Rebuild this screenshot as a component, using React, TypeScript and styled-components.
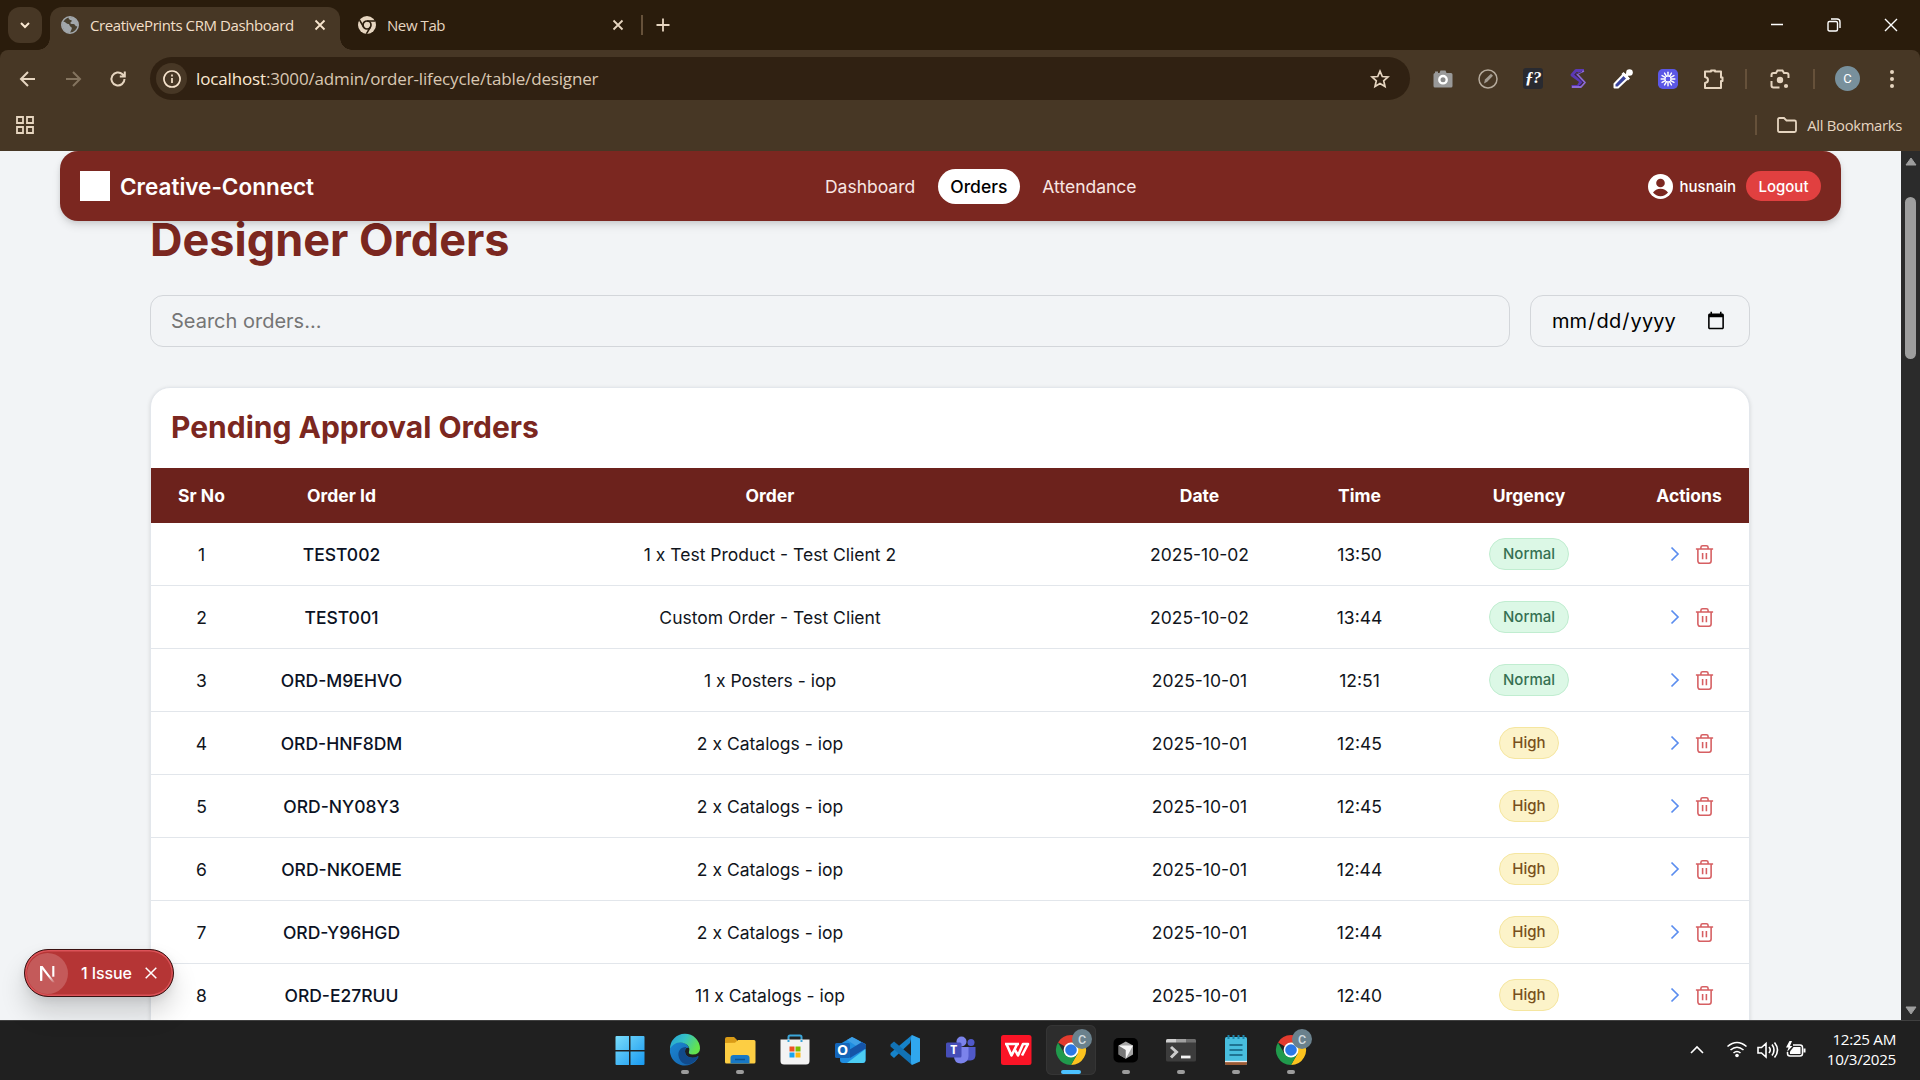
import React from "react";
import styled, { createGlobalStyle, css } from "styled-components";

const ink = "#e6d5c0";

const Global = createGlobalStyle`
  * { box-sizing: border-box; }
  body { margin: 0; overflow: hidden; background: #202020; }
  input, button { font: inherit; }
`;

const Screen = styled.div`
  width: 1920px;
  height: 1080px;
  display: flex;
  flex-direction: column;
  overflow: hidden;
  font-family: Inter, "Liberation Sans", sans-serif;
`;

/* ---------- browser chrome ---------- */

const TabStrip = styled.div`
  flex: 0 0 50px;
  display: flex;
  align-items: flex-start;
  padding: 7px 0 0 8px;
  background: #2a1c0c;
  color: ${ink};
  font: 15px "Open Sans", "Noto Sans", sans-serif;
`;

const TabSearch = styled.div`
  width: 34px;
  height: 36px;
  margin-right: 8px;
  border-radius: 12px;
  background: #473725;
  display: grid;
  place-items: center;
`;

const Tab = styled.div<{ $active?: boolean }>`
  position: relative;
  width: ${(p) => (p.$active ? 290 : 301)}px;
  height: 43px;
  display: flex;
  align-items: center;
  padding: 0 ${(p) => (p.$active ? 13 : 16)}px 7px ${(p) => (p.$active ? 11 : 18)}px;
  letter-spacing: -0.42px;
  white-space: nowrap;
  ${(p) =>
    p.$active &&
    css`
      background: #473725;
      border-radius: 12px 12px 0 0;
      color: #f2dfc8;
      &::before,
      &::after {
        content: "";
        position: absolute;
        bottom: 0;
        width: 12px;
        height: 12px;
      }
      &::before {
        left: -12px;
        background: radial-gradient(circle at 0 0, transparent 11.5px, #473725 12px);
      }
      &::after {
        right: -12px;
        background: radial-gradient(circle at 100% 0, transparent 11.5px, #473725 12px);
      }
    `}
`;

const TabTitle = styled.span`
  flex: 1;
  margin-left: 11px;
`;

const NewTab = styled.div`
  height: 36px;
  display: flex;
  align-items: center;
  gap: 13px;
`;

const Divider = styled.i`
  width: 2px;
  height: 20px;
  background: #66513a;
`;

const WindowControls = styled.div`
  margin-left: auto;
  height: 36px;
  display: flex;
  align-items: center;
  gap: 43px;
  padding: 0 22px 1px 0;
`;

const Toolbar = styled.div`
  flex: 0 0 58px;
  display: flex;
  align-items: center;
  padding-bottom: 1px;
  background: #473725;
  border-radius: 8px 8px 0 0;
`;

const ToolbarBack = styled.div`
  flex: 0 0 58px;
  background: #2a1c0c;
  display: flex;
  flex-direction: column;
`;

const NavIcons = styled.div`
  width: 150px;
  display: flex;
  align-items: center;
  gap: 25px;
  padding-left: 18px;
`;

const Address = styled.div`
  width: 1260px;
  height: 43px;
  border-radius: 22px;
  background: #302112;
  display: flex;
  align-items: center;
  padding: 0 20px 0 6px;
  color: #d9c8b3;
  font: 17px "Open Sans", "Noto Sans", sans-serif;
`;

const SiteInfo = styled.div`
  width: 31px;
  height: 31px;
  border-radius: 50%;
  background: #473725;
  display: grid;
  place-items: center;
`;

const Url = styled.span`
  flex: 1;
  margin-left: 9px;
  padding-bottom: 1px;
  letter-spacing: -0.15px;
  b { font-weight: 400; color: #fbe9d3; }
`;

const Extensions = styled.div`
  display: flex;
  align-items: center;
  margin-left: 23px;
`;

const Slot = styled.div<{ $w?: number }>`
  width: ${(p) => p.$w ?? 45}px;
  height: 28px;
  display: flex;
  align-items: center;
`;

const FontBadge = styled.span`
  width: 20px;
  height: 21px;
  border-radius: 3px;
  background: #292a30;
  color: #fff;
  font: italic bold 17px/19px "Liberation Serif", serif;
  text-align: center;
  letter-spacing: -0.5px;
`;

const Profile = styled.span`
  width: 25px;
  height: 25px;
  border-radius: 50%;
  background: #78909c;
  color: #fff;
  font: 13px/25px Roboto, sans-serif;
  text-align: center;
`;

const Bookmarks = styled.div`
  flex: 0 0 43px;
  display: flex;
  align-items: center;
  padding: 0 18px 10px 16px;
  background: #473725;
  color: ${ink};
  font: 14.8px "Open Sans", "Noto Sans", sans-serif;
  letter-spacing: -0.3px;
`;

const AllBookmarks = styled.div`
  margin-left: auto;
  display: flex;
  align-items: center;
  span { margin-left: 10px; }
  svg { margin-left: 20px; }
`;

/* ---------- page ---------- */

const Viewport = styled.div`
  position: relative;
  flex: 1;
  min-height: 0;
  display: flex;
  background: #f2f4f6;
`;

const Page = styled.main`
  flex: 1;
  min-width: 0;
  overflow: hidden;
  padding-left: 60px;
`;

const Navbar = styled.nav`
  position: relative;
  z-index: 1;
  width: 1781px;
  height: 70px;
  padding: 0 20px;
  border-radius: 18px;
  background: #7b2720;
  box-shadow: 0 5px 9px rgba(0, 0, 0, 0.1), 0 2px 4px rgba(0, 0, 0, 0.08);
  display: flex;
  justify-content: space-between;
  align-items: center;
  color: #fff;
`;

const Brand = styled.div`
  display: flex;
  align-items: center;
  gap: 10px;
  font-size: 22.5px;
  font-weight: 600;
`;

const LogoBox = styled.i`
  width: 30px;
  height: 30px;
  background: #fff;
`;

const Menu = styled.div`
  display: flex;
  font-size: 17.5px;
`;

const MenuItem = styled.a<{ $active?: boolean }>`
  height: 35px;
  padding: 0 12.5px;
  margin: 0 5px;
  border-radius: 18px;
  line-height: 35px;
  color: ${(p) => (p.$active ? "#000" : "#f8e6e3")};
  background: ${(p) => (p.$active ? "#fff" : "transparent")};
  font-weight: ${(p) => (p.$active ? 500 : 400)};
`;

const Account = styled.div`
  display: flex;
  align-items: center;
  font-size: 15px;
  font-weight: 500;
  svg { margin-right: 7px; }
`;

const Logout = styled.button`
  width: 75px;
  height: 30px;
  margin-left: 10px;
  padding: 0;
  border: 0;
  border-radius: 15px;
  background: #e14040;
  color: #fff;
  font-weight: 500;
`;

const Content = styled.div`
  width: 1600px;
  margin: -8px 0 0 90px;
`;

const Title = styled.h1`
  margin: 0;
  height: 54px;
  line-height: 54px;
  font-size: 45px;
  font-weight: 700;
  color: #7b2720;
`;

const Filters = styled.div`
  display: flex;
  gap: 20px;
  margin: 28px 0 40px;
`;

const field = css`
  height: 52px;
  padding: 0 20px;
  border: 1px solid #d3d6da;
  border-radius: 13px;
  background: transparent;
  font-size: 20px;
  color: #000;
`;

const Search = styled.input`
  ${field}
  flex: 1;
  &::placeholder { color: #757575; }
`;

const DateField = styled.input`
  ${field}
  width: 220px;
  padding-right: 21px;
  letter-spacing: 0.1px;
`;

const Card = styled.section`
  border: 1px solid #e3e7ec;
  border-radius: 20px 20px 0 0;
  background: #fff;
  box-shadow: 0 1px 4px rgba(0, 0, 0, 0.12);
  height: 760px;
  overflow: hidden;
`;

const CardTitle = styled.h2`
  margin: 0;
  height: 80px;
  padding: 0 20px;
  line-height: 79px;
  font-size: 30px;
  font-weight: 700;
  color: #7b2720;
`;

const Row = styled.div<{ $head?: boolean }>`
  height: ${(p) => (p.$head ? 55 : 63)}px;
  display: grid;
  grid-template-columns: 101px 179px 678px 181px 139px 200px 120px;
  align-items: center;
  justify-items: center;
  font-size: 17.5px;
  color: ${(p) => (p.$head ? "#fff" : "#11151c")};
  font-weight: ${(p) => (p.$head ? 700 : 400)};
  background: ${(p) => (p.$head ? "#6c221c" : "#fff")};
  border-bottom: ${(p) => (p.$head ? "0" : "1px solid #e2e6eb")};
`;

const OrderId = styled.span`
  color: #0b1224;
  font-weight: 500;
`;

const Pill = styled.span<{ $high?: boolean }>`
  height: 32px;
  padding: 0 12.5px;
  border-radius: 16px;
  line-height: 30px;
  font-size: 15px;
  font-weight: 500;
  border: 1px solid ${(p) => (p.$high ? "#f5e6a0" : "#c0edd0")};
  background: ${(p) => (p.$high ? "#fcf3c9" : "#dcf8e6")};
  color: ${(p) => (p.$high ? "#78501c" : "#357052")};
`;

const Actions = styled.span`
  display: flex;
  align-items: center;
  gap: 14px;
  margin-left: 6px;
`;

const Scrollbar = styled.div`
  flex: 0 0 19px;
  background: #2b2b2b;
  display: flex;
  flex-direction: column;
  align-items: center;
  padding: 6px 0 5px;
`;

const Thumb = styled.i`
  width: 11px;
  height: 162px;
  margin: 31px 0 auto;
  border-radius: 6px;
  background: #9e9e9e;
`;

const IssueToast = styled.div`
  position: absolute;
  z-index: 2;
  left: 24px;
  top: 798px;
  width: 150px;
  height: 48px;
  padding: 0 16px 0 2px;
  border-radius: 24px;
  border: 1px solid #3a1111;
  background: #b53535;
  box-shadow: inset 0 0 0 1.5px #db5358, 0 16px 26px rgba(0, 0, 0, 0.16), 0 3px 8px rgba(0, 0, 0, 0.08);
  display: flex;
  align-items: center;
  color: #fff;
  font-size: 16px;
  font-weight: 500;
  letter-spacing: -0.1px;
  span { flex: 1; margin-left: 13px; white-space: nowrap; }
`;

const NextBadge = styled.i`
  width: 41px;
  height: 41px;
  border-radius: 50%;
  background: #c45a5a;
  display: grid;
  place-items: center;
`;

/* ---------- taskbar ---------- */

const Taskbar = styled.footer`
  flex: 0 0 60px;
  display: flex;
  align-items: center;
  background: #202020;
  border-top: 1px solid #404040;
  padding: 0 0 2px 605px;
`;

const TaskButton = styled.div<{ $active?: boolean }>`
  width: 50px;
  height: 50px;
  margin-right: 5.1px;
  border-radius: 6px;
  display: flex;
  flex-direction: column;
  align-items: center;
  padding-top: 8px;
  background: ${(p) => (p.$active ? "#2d2d2d" : "transparent")};
  box-shadow: ${(p) => (p.$active ? "inset 0 0 0 1px #353535" : "none")};
  svg { display: block; overflow: visible; flex: none; }
`;

const Running = styled.i<{ $active?: boolean }>`
  width: ${(p) => (p.$active ? 20 : 8)}px;
  height: 4px;
  margin-top: 2px;
  border-radius: 2px;
  background: ${(p) => (p.$active ? "#4cc2ff" : "#9c9c9c")};
`;

const Tray = styled.div`
  margin-left: auto;
  display: flex;
  align-items: center;
  padding-right: 24px;
  color: #fff;
  svg { flex: none; }
`;

const Clock = styled.div`
  width: 89px;
  padding-bottom: 1px;
  text-align: right;
  font: 15.2px/20px "Open Sans", "Noto Sans", sans-serif;
  letter-spacing: -0.3px;
  white-space: nowrap;
`;

/* ---------- icons ---------- */

type StrokeProps = { w: number; h?: number; d: string; c?: string; s?: number };
const Line = ({ w, h = w, d, c = ink, s = 2 }: StrokeProps) => (
  <svg width={w} height={h} viewBox={`0 0 ${w} ${h}`} fill="none" stroke={c} strokeWidth={s}>
    <path d={d} />
  </svg>
);

const Globe = () => (
  <svg width="18" height="18" viewBox="0 0 18 18">
    <circle cx="9" cy="9" r="8.2" fill="#49402f" stroke="#a2a7ab" strokeWidth="1.6" />
    <path d="M2 6c2-1 3 2 5 2s1 2 3 3 0 3-1 6c-4 0-7-3-8-8zM8 1c-1 3 1 3 2 3s1 2-1 3c2 2 4 0 5 2s1 1 3 1C17 4 13 1 8 1z" fill="#a2a7ab" />
  </svg>
);

const ChromeMono = () => (
  <svg width="18" height="18" viewBox="0 0 18 18">
    <circle cx="9" cy="9" r="9" fill={ink} />
    <circle cx="9" cy="9" r="4" fill={ink} stroke="#2a1c0c" strokeWidth="1.7" />
    <path d="M9 5h8M5.6 11 1.6 4.2M12.4 11 8.4 17.8" stroke="#2a1c0c" strokeWidth="1.6" />
  </svg>
);

const Chrome = () => (
  <svg width="30" height="35" viewBox="0 0 30 35">
    <g transform="translate(0 2)">
      <path d="M15 15 2 7.5A15 15 0 0 1 28 7.5L15 7.5z" fill="#e33b2e" />
      <path d="M28 7.5A15 15 0 0 1 15 30l6.5-11.2L15 7.5z" fill="#fcc31e" />
      <path d="M2 7.5A15 15 0 0 0 15 30l6.5-11.2-13 0z" fill="#209a4c" />
      <circle cx="15" cy="15" r="7.4" fill="#fff" />
      <circle cx="15" cy="15" r="5.8" fill="#2b78e6" />
    </g>
    <circle cx="26" cy="6" r="10" fill="#6a818d" />
    <text x="26" y="10.5" fontSize="12.5" fontFamily="Roboto, sans-serif" fontWeight="500" fill="#d3dce0" textAnchor="middle">C</text>
  </svg>
);

const Trash = () => (
  <svg width="21" height="21" viewBox="0 0 20 20" fill="none" stroke="#d65f62" strokeWidth="1.5">
    <path d="M1.800 4.7h16.400M3.7 4.7v11.600a2 2 0 0 0 2 2h8.600a2 2 0 0 0 2-2V4.700M6.600 4.500V3.200q0-1.600 1.600-1.600h3.600q1.600 0 1.600 1.600v1.300M8.200 8.500v6M11.800 8.500v6" />
  </svg>
);

const taskIcons: { name: string; run?: boolean; active?: boolean; icon: React.ReactNode }[] = [
  {
    name: "start",
    icon: (
      <svg width="30" height="35" viewBox="0 0 30 35">
        <defs>
          <linearGradient id="win" x1="0" y1="0" x2="1" y2="1">
            <stop offset="0" stopColor="#79dcfb" />
            <stop offset="1" stopColor="#1899f0" />
          </linearGradient>
        </defs>
        <path d="M1.500 3H14v14H.5V4q0-1 1-1zM15.500 3H28.500q1 0 1 1V17h-14zM.5 18.500H14v13.500H1.500q-1 0-1-1zM15.500 18.500h14V31q0 1-1 1h-13z" fill="url(#win)" />
      </svg>
    ),
  },
  {
    name: "edge",
    run: true,
    icon: (
      <svg width="30" height="35" viewBox="0 0 30 35">
        <defs>
          <linearGradient id="edgeTop" x1="0" y1="0" x2="1" y2=".4">
            <stop offset="0" stopColor="#249fd8" />
            <stop offset=".5" stopColor="#35c1c6" />
            <stop offset="1" stopColor="#63e34d" />
          </linearGradient>
          <linearGradient id="edgeLow" x1="0" y1="0" x2="1" y2="1">
            <stop offset="0" stopColor="#1b86d3" />
            <stop offset="1" stopColor="#1460a8" />
          </linearGradient>
        </defs>
        <path d="M0 16Q1 9 9 9q8 0 10 6-4-1-4 3.500 0 6 7.500 6.300 3.500 0 5.500-1.500.8 0 .3 1A15 15 0 0 1 0 16z" fill="url(#edgeLow)" />
        <path d="M11 15.500q-4 4-2 9.500 2.500 6 9 6.500 6-1 10-7 .5-1.500-.5-1.200-2 1.500-5 1.500-7.500-.3-7.500-6.300 0-3 1.500-4.500-3-.5-5.500 1.500z" fill="#114a8b" />
        <path d="M0 16A15 15 0 0 1 30 15.500q0 6-7.500 6-4.500 0-3.500-2.700C21 13 15 9 9.500 9.500Q3 10 0 16z" fill="url(#edgeTop)" />
      </svg>
    ),
  },
  {
    name: "explorer",
    run: true,
    icon: (
      <svg width="30" height="35" viewBox="0 0 30 35">
        <path d="M0 6q0-2 2-2h7l3 3v4H0z" fill="#d99b16" />
        <path d="M0 10l10-.3 3-2.700h16q1.500 0 1.500 1.500V29q0 1.500-1.500 1.500H1.500Q0 30.500 0 29z" fill="#fdce43" />
        <path d="M5.500 30.500V25q0-3 3-3h13q3 0 3 3v5.500z" fill="#1778c6" />
        <path d="M10 26.500h10" stroke="#0c5492" strokeWidth="1.500" />
      </svg>
    ),
  },
  {
    name: "store",
    icon: (
      <svg width="30" height="35" viewBox="0 0 30 35">
        <path d="M8.500 8V4q0-1.500 1.500-1.500h10q1.500 0 1.500 1.500v4" fill="none" stroke="#3aa5d8" strokeWidth="2" />
        <path d="M.5 6.500h29V28q0 3.500-3.500 3.500H4Q.5 31.500.5 28z" fill="#f3f3f3" />
        <path d="M8.500 7v2M21.500 7v2" stroke="#3aa5d8" strokeWidth="2" />
        <path d="M9.500 13.500h5v5h-5z" fill="#ef5125" />
        <path d="M15.500 13.500h5v5h-5z" fill="#7fba00" />
        <path d="M9.500 19.500h5v5h-5z" fill="#18a4ef" />
        <path d="M15.500 19.500h5v5h-5z" fill="#fdb813" />
      </svg>
    ),
  },
  {
    name: "outlook",
    icon: (
      <svg width="30" height="35" viewBox="0 0 30 35">
        <path d="M5 11 17 4l13.500 7v16q0 3-3 3H8q-3 0-3-3z" fill="#1f8de0" />
        <path d="M12 7l14 9 4.500-4.500L20 5.500 17 4z" fill="#3d9fe6" />
        <path d="M14 17 27 9l3.500 2.500v4L15 25z" fill="#1554a8" />
        <path d="M12 30 30.500 16v11q0 3-3 3z" fill="#4ccdf3" />
        <rect x="0" y="10" width="15" height="15" rx="1.500" fill="#1465b8" />
        <text x="7.500" y="22.300" textAnchor="middle" fill="#fff" fontSize="14" fontWeight="700" fontFamily="Open Sans, sans-serif">O</text>
      </svg>
    ),
  },
  {
    name: "code",
    icon: (
      <svg width="30" height="35" viewBox="0 0 30 35">
        <path d="M22 2l-2 8L4 25l-3.500-3v-2z" fill="#1683ca" />
        <path d="M.5 13.500v-2L4 8.500 22 23.500V32z" fill="#1272b5" />
        <path d="M22 2l8 3.500v23L22 32q-1-1-1-3V5q0-2 1-3z" fill="#30a7ee" />
      </svg>
    ),
  },
  {
    name: "teams",
    icon: (
      <svg width="30" height="35" viewBox="0 0 30 35">
        <circle cx="15.500" cy="8.500" r="5" fill="#7b83eb" />
        <circle cx="25" cy="9.500" r="3.500" fill="#5059c9" />
        <path d="M20 14h9.500v8q0 5-5 5.500H20z" fill="#5059c9" />
        <path d="M8 14h14.500v9q0 7-7.500 7.500-7-.5-7-7z" fill="#7b83eb" />
        <rect x="0" y="9.500" width="15.500" height="15" rx="1.500" fill="#464eb8" />
        <text x="7.700" y="21.200" textAnchor="middle" fill="#fff" fontSize="12" fontWeight="700" fontFamily="Open Sans, sans-serif">T</text>
      </svg>
    ),
  },
  {
    name: "wps",
    icon: (
      <svg width="30" height="35" viewBox="0 0 30 35">
        <rect x="0" y="2" width="30.500" height="30" rx="2.500" fill="#fa1426" />
        <path d="M4 11h14M5.500 11l5 11.500 5.500-11M13.500 16l3.500 6.500L22 11h5l-6 11.500" fill="none" stroke="#fff" strokeWidth="2.600" strokeLinejoin="round" />
      </svg>
    ),
  },
  { name: "chrome", run: true, active: true, icon: <Chrome /> },
  {
    name: "cursor",
    run: true,
    icon: (
      <svg width="30" height="35" viewBox="0 0 30 35">
        <rect x="2.500" y="5" width="24.500" height="24.500" rx="5" fill="#000" />
        <path d="M14.800 8.500 22 12.500v9l-7.200 4.200-7.200-4.200v-9z" fill="#a5a5a5" />
        <path d="M7.600 12.500 14.800 16.500v9.200l-7.200-4.200z" fill="#777" />
        <path d="M7.600 12.500H22L14.800 25.700V17z" fill="#f5f5f5" />
      </svg>
    ),
  },
  {
    name: "terminal",
    run: true,
    icon: (
      <svg width="30" height="35" viewBox="0 0 30 35">
        <rect x="0" y="6" width="30" height="22.500" rx="1.500" fill="#3c3c3c" />
        <path d="M0 9.500V7.500Q0 6 1.500 6H10v3.500z" fill="#d0d0d0" />
        <path d="M10 6h10v3.500H10z" fill="#a0a0a0" />
        <path d="M20 6h8.500Q30 6 30 7.500v2H20z" fill="#6e6e6e" />
        <path d="M5 14l5.500 5L5 24.500" fill="none" stroke="#ccc" strokeWidth="3" />
        <path d="M15 24h9.500" stroke="#f3f3f3" strokeWidth="2.800" />
      </svg>
    ),
  },
  {
    name: "notepad",
    run: true,
    icon: (
      <svg width="30" height="35" viewBox="0 0 30 35">
        <rect x="4" y="4" width="22" height="28" rx="1.500" fill="#48bede" />
        <path d="M4 29h22v1.500q0 1.500-1.500 1.500h-19Q4 32 4 30.500z" fill="#9b5a34" />
        <path d="M4 28.500h22" stroke="#e9eef0" strokeWidth="1.300" />
        <path d="M8.500 12h13M8.500 17h13M8.500 22h13" stroke="#125c7b" strokeWidth="1.700" />
        <path d="M7.500 2v4M12.500 2v4M17.500 2v4M22.500 2v4" stroke="#1c86ac" strokeWidth="2" />
      </svg>
    ),
  },
  { name: "chrome2", run: true, icon: <Chrome /> },
];

const orders: [string, string, string, string, boolean][] = [
  ["TEST002", "1 x Test Product - Test Client 2", "2025-10-02", "13:50", false],
  ["TEST001", "Custom Order - Test Client", "2025-10-02", "13:44", false],
  ["ORD-M9EHVO", "1 x Posters - iop", "2025-10-01", "12:51", false],
  ["ORD-HNF8DM", "2 x Catalogs - iop", "2025-10-01", "12:45", true],
  ["ORD-NY08Y3", "2 x Catalogs - iop", "2025-10-01", "12:45", true],
  ["ORD-NKOEME", "2 x Catalogs - iop", "2025-10-01", "12:44", true],
  ["ORD-Y96HGD", "2 x Catalogs - iop", "2025-10-01", "12:44", true],
  ["ORD-E27RUU", "11 x Catalogs - iop", "2025-10-01", "12:40", true],
];

const rays = Array.from({ length: 12 }, (_, i) => i * 30);

function BrowserChrome() {
  return (
    <>
      <TabStrip>
        <TabSearch>
          <Line w={12} d="M2 4l4 4 4-4" c="#fbe9d3" />
        </TabSearch>
        <Tab $active>
          <Globe />
          <TabTitle>CreativePrints CRM Dashboard</TabTitle>
          <Line w={14} d="M2.500 2.500l9 9M11.500 2.500l-9 9" c="#f7e4cd" s={1.8} />
        </Tab>
        <Tab>
          <ChromeMono />
          <TabTitle>New Tab</TabTitle>
          <Line w={14} d="M2.500 2.500l9 9M11.500 2.500l-9 9" s={1.8} />
        </Tab>
        <NewTab>
          <Divider />
          <Line w={14} d="M7 .5v13M.5 7h13" s={1.8} />
        </NewTab>
        <WindowControls>
          <Line w={14} d="M1 6.500h12" c="#fff" s={1.5} />
          <Line w={14} d="M1 5q0-1.500 1.500-1.500h6.500q1.500 0 1.500 1.500v6.500q0 1.500-1.500 1.500H2.500Q1 13 1 11.500zM4 1h6q3 0 3 3v6" c="#fff" s={1.4} />
          <Line w={14} d="M1 1l12 12M13 1L1 13" c="#fff" s={1.4} />
        </WindowControls>
      </TabStrip>
      <ToolbarBack>
        <Toolbar>
          <NavIcons>
            <Line w={20} d="M17 10H3M10 3l-7 7 7 7" />
            <Line w={20} d="M3 10h14M10 3l7 7-7 7" c="#84745f" />
            <Line w={20} d="M16.500 10a6.500 6.500 0 1 1-2-4.700l2 2M16.800 2.500v5h-5" />
          </NavIcons>
          <Address>
            <SiteInfo>
              <Line w={18} d="M9 1a8 8 0 1 0 .01 0M9 8v5M9 4.500v2" c="#f6e3cc" s={1.7} />
            </SiteInfo>
            <Url>
              <b>localhost</b>:3000/admin/order-lifecycle/table/designer
            </Url>
            <svg width="20" height="20" viewBox="0 0 20 20" fill="none" stroke={ink} strokeWidth="1.7">
              <path d="M10 2.200l2.300 5.300 5.700.5-4.300 3.800 1.300 5.700-5-3-5 3 1.300-5.700L2 8l5.700-.5z" />
            </svg>
          </Address>
          <Extensions>
            <Slot>
              <svg width="20" height="20" viewBox="0 0 20 20">
                <path d="M2 4V2.500h3V4h1.500l1-2.500h5L13.500 4H18q1.500 0 1.500 1.500v11.500q0 1.500-1.500 1.500H2Q.5 18.500.5 17V5.500Q.5 4 2 4z" fill="#999" />
                <circle cx="10" cy="10.700" r="3.700" fill="#8a8a8a" stroke="#fff" strokeWidth="2.400" />
              </svg>
            </Slot>
            <Slot>
              <svg width="20" height="20" viewBox="0 0 20 20" fill="none">
                <circle cx="10" cy="10" r="9" stroke="#b5aa9c" strokeWidth="1.500" />
                <path d="M6 14.500l1-4L13 4.800l2 2-5.800 6z" fill="#a39b91" />
              </svg>
            </Slot>
            <Slot>
              <FontBadge>ƒ?</FontBadge>
            </Slot>
            <Slot>
              <svg width="20" height="20" viewBox="0 0 20 20" fill="none" strokeLinejoin="round">
                <path d="M16 1.500H8L4 6l9 6.500-3 5H3.500" stroke="#5b38b5" strokeWidth="3" />
                <path d="M16 2 9 5l8 8.500-4 4.500H4" stroke="#8d6ad8" strokeWidth="1.800" />
                <path d="M14 2.500 7 5.500l8 8-4 3.500" stroke="#2f1763" strokeWidth=".8" />
              </svg>
            </Slot>
            <Slot>
              <svg width="20" height="20" viewBox="0 0 20 20" fill="none">
                <path d="M11 5 1.500 15v3.500H5L15 9z" fill="#39439c" stroke="#fff" strokeWidth="2" strokeLinejoin="round" />
                <path d="M9.500 4 16 10.500M12 8l4.500-5" stroke="#fff" strokeWidth="3" />
                <circle cx="16.500" cy="3.500" r="3.300" fill="#fff" />
              </svg>
            </Slot>
            <Slot>
              <svg width="20" height="20" viewBox="0 0 21 21">
                <rect width="21" height="21" rx="5" fill="#5b57e6" />
                <g stroke="#fff" strokeWidth="1.500" strokeLinecap="round">
                  {rays.map((a) => (
                    <path key={a} d="M10.500 3.300v4" transform={`rotate(${a} 10.500 10.500)`} />
                  ))}
                </g>
                <circle cx="10.500" cy="10.500" r="3.200" fill="none" stroke="#fff" />
              </svg>
            </Slot>
            <Slot $w={42}>
              <svg width="22" height="22" viewBox="0 0 22 22" fill="none" stroke={ink} strokeWidth="2" strokeLinejoin="round">
                <path d="M2 3.500h6V2.500h4v1h6v6h1.500v3.500H18v7H2v-5q3-.5 3-3t-3-3z" />
              </svg>
            </Slot>
            <Slot $w={25}>
              <Divider />
            </Slot>
            <Slot $w={43}>
              <svg width="20" height="20" viewBox="0 0 20 20" fill="none" stroke={ink} strokeWidth="2">
                <path d="M1.500 8V6q0-2 2-2H6l1.500-2.500h5L14 4h2.500q2 0 2 2v3M1.500 12v4.500q0 2 2 2h6" />
                <circle cx="10" cy="11" r="3.200" fill={ink} stroke="none" />
                <circle cx="16" cy="17" r="2.100" fill={ink} stroke="none" />
              </svg>
            </Slot>
            <Slot $w={22}>
              <Divider />
            </Slot>
            <Slot $w={54}>
              <Profile>C</Profile>
            </Slot>
            <svg width="6" height="20" viewBox="0 0 6 20" fill={ink}>
              <circle cx="3" cy="3" r="2" />
              <circle cx="3" cy="10" r="2" />
              <circle cx="3" cy="17" r="2" />
            </svg>
          </Extensions>
        </Toolbar>
      </ToolbarBack>
      <Bookmarks>
        <Line w={18} d="M1 1h6v6H1zM11 1h6v6h-6zM1 11h6v6H1zM11 11h6v6h-6z" s={1.8} />
        <AllBookmarks>
          <Divider />
          <Line w={20} h={16} d="M1 13.500V2.500Q1 1 2.500 1H7l2.500 2.500h8Q19 3.500 19 5v8.500q0 1.500-1.500 1.500h-15Q1 15 1 13.500z" s={1.8} />
          <span>All Bookmarks</span>
        </AllBookmarks>
      </Bookmarks>
    </>
  );
}

export default function App() {
  return (
    <Screen>
      <Global />
      <BrowserChrome />
      <Viewport>
        <Page>
          <Navbar>
            <Brand>
              <LogoBox />
              Creative-Connect
            </Brand>
            <Menu>
              <MenuItem>Dashboard</MenuItem>
              <MenuItem $active>Orders</MenuItem>
              <MenuItem>Attendance</MenuItem>
            </Menu>
            <Account>
              <svg width="25" height="25" viewBox="0 0 25 25">
                <circle cx="12.500" cy="12.500" r="12.500" fill="#fff" />
                <circle cx="12.500" cy="9" r="4.300" fill="#7b2720" />
                <path d="M5 18.500q2.500-3.800 7.500-3.800t7.500 3.800q-3 3.700-7.500 3.700T5 18.500z" fill="#7b2720" />
              </svg>
              husnain
              <Logout>Logout</Logout>
            </Account>
          </Navbar>
          <Content>
            <Title>Designer Orders</Title>
            <Filters>
              <Search placeholder="Search orders..." />
              <DateField type="date" />
            </Filters>
            <Card>
              <CardTitle>Pending Approval Orders</CardTitle>
              <Row $head>
                {["Sr No", "Order Id", "Order", "Date", "Time", "Urgency", "Actions"].map((h) => (
                  <span key={h}>{h}</span>
                ))}
              </Row>
              {orders.map(([id, text, date, time, high], i) => (
                <Row key={id}>
                  <span>{i + 1}</span>
                  <OrderId>{id}</OrderId>
                  <span>{text}</span>
                  <span>{date}</span>
                  <span>{time}</span>
                  <Pill $high={high}>{high ? "High" : "Normal"}</Pill>
                  <Actions>
                    <Line w={10} h={16} d="M1.500 1.500 8 8l-6.500 6.500" c="#5b8def" s={1.7} />
                    <Trash />
                  </Actions>
                </Row>
              ))}
            </Card>
          </Content>
        </Page>
        <Scrollbar>
          <svg width="12" height="9" viewBox="0 0 12 9">
            <path d="M6 1l5 7H1z" fill="#9e9e9e" stroke="#9e9e9e" strokeLinejoin="round" />
          </svg>
          <Thumb />
          <svg width="12" height="9" viewBox="0 0 12 9">
            <path d="M6 8l5-7H1z" fill="#9e9e9e" stroke="#9e9e9e" strokeLinejoin="round" />
          </svg>
        </Scrollbar>
        <IssueToast>
          <NextBadge>
            <svg width="17" height="19" viewBox="0 0 16 18" fill="none">
              <defs>
                <linearGradient id="fade" x1="0" y1="0" x2="0" y2="1">
                  <stop offset=".6" stopColor="#fff" />
                  <stop offset="1" stopColor="#fff" stopOpacity="0.1" />
                </linearGradient>
              </defs>
              <path d="M1 2h2.300L15 17.500h-2.300L3 5v11H1zM12.500 2h2v10h-2z" fill="url(#fade)" />
              <path d="M1 16V2h2v14z" fill="#fff" />
            </svg>
          </NextBadge>
          <span>1 Issue</span>
          <Line w={12} d="M.7.7l10.600 10.600M11.300.7L.7 11.300" c="#fff" s={1.5} />
        </IssueToast>
      </Viewport>
      <Taskbar>
        {taskIcons.map((t) => (
          <TaskButton key={t.name} $active={t.active}>
            {t.icon}
            {t.run && <Running $active={t.active} />}
          </TaskButton>
        ))}
        <Tray>
          <Line w={15} h={10} d="M1 8l6-6 6 6" c="#fff" s={1.6} />
          <svg width="80" height="20" viewBox="0 0 80 20" fill="none" stroke="#fff" strokeWidth="1.600">
            <g transform="translate(4 0)">
              <path d="M18.500 6.500q9.500-8 19 0M21.500 10q6.500-5.500 13 0M24.500 13q3.500-3 7 0" />
              <circle cx="28" cy="15.500" r="1.800" fill="#fff" stroke="none" />
              <path d="M49 7.500h3.500L57 3.500v13.500l-4.500-4H49zM60 7q2.500 3 0 6M63 4.500q4 5.500 0 11M65.500 2.500q6 7.500 0 15" />
            </g>
          </svg>
          <svg width="22" height="18" viewBox="0 0 22 18" fill="none" stroke="#fff" strokeWidth="1.500">
            <path d="M8 4h7q2.500 0 2.500 2.500v6q0 2.500-2.500 2.500H5q-2.500 0-2.500-2.500V11" />
            <path d="M8.500 6h7v7H5v-2.500z" fill="#fff" stroke="none" />
            <path d="M4.500 0 1 6.500h2.500L2 11l5.500-6H5L7 0z" fill="#fff" stroke="none" />
            <path d="M19.500 7.500v4" strokeWidth="2" />
          </svg>
          <Clock>
            12:25 AM
            <br />
            10/3/2025
          </Clock>
        </Tray>
      </Taskbar>
    </Screen>
  );
}
